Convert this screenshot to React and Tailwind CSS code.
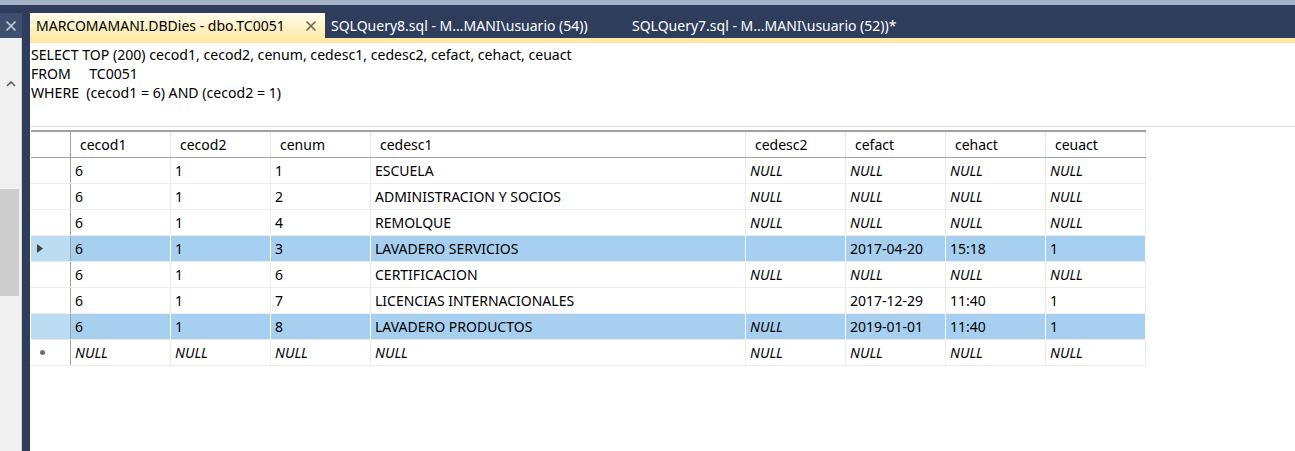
import React from "react";

const cols = [
  { key: "cecod1", w: 100 },
  { key: "cecod2", w: 100 },
  { key: "cenum", w: 100 },
  { key: "cedesc1", w: 375 },
  { key: "cedesc2", w: 100 },
  { key: "cefact", w: 100 },
  { key: "cehact", w: 100 },
  { key: "ceuact", w: 100 },
];

const N = null;
const rows = [
  ["6", "1", "1", "ESCUELA", N, N, N, N],
  ["6", "1", "2", "ADMINISTRACION Y SOCIOS", N, N, N, N],
  ["6", "1", "4", "REMOLQUE", N, N, N, N],
  ["6", "1", "3", "LAVADERO SERVICIOS", "", "2017-04-20", "15:18", "1"],
  ["6", "1", "6", "CERTIFICACION", N, N, N, N],
  ["6", "1", "7", "LICENCIAS INTERNACIONALES", "", "2017-12-29", "11:40", "1"],
  ["6", "1", "8", "LAVADERO PRODUCTOS", N, "2019-01-01", "11:40", "1"],
  [N, N, N, N, N, N, N, N],
];
const selected = [3, 6];

function CloseX({ className }) {
  return (
    <svg width="12" height="12" viewBox="0 0 12 12" className={className}>
      <path d="M1.5 1.5 L10.5 10.5 M10.5 1.5 L1.5 10.5" stroke="currentColor" strokeWidth="1.6" />
    </svg>
  );
}

export default function App() {
  return (
    <div className="w-[1295px] h-[451px] overflow-hidden flex flex-col bg-[#2e3d5b] font-['Noto_Sans','Open_Sans',sans-serif] text-[14px] text-black">
      <div className="h-[5px] bg-[#a6b2c8]" />
      <div className="flex flex-1 min-h-0">
        {/* left tool window */}
        <div className="w-[22px] flex flex-col">
          <div className="h-[8px]" />
          <div className="h-[25px] bg-[#3f4f6e] flex items-center justify-center text-[#c8cfdc]">
            <CloseX />
          </div>
          <div className="flex-1 bg-[#f0f0f0] border-r border-[#cfd3da] flex flex-col">
            <div className="h-[38px]" />
            <div className="h-[14px] flex items-center justify-center text-[#606060]">
              <svg width="10" height="7" viewBox="0 0 10 7">
                <path d="M1 6 L5 2 L9 6" stroke="currentColor" strokeWidth="1.6" fill="none" />
              </svg>
            </div>
            <div className="h-[99px]" />
            <div className="h-[107px] w-[19px] bg-[#cdcdcd]" />
          </div>
        </div>
        <div className="w-[8px]" />
        {/* document area */}
        <div className="flex-1 flex flex-col min-w-0">
          <div className="h-[33px] flex items-end">
            <div className="h-[25px] w-[295px] bg-gradient-to-b from-[#fffcec] to-[#ffe9a8] flex items-center pl-[6px] pr-[8px]">
              <span className="flex-1 whitespace-nowrap">MARCOMAMANI.DBDies - dbo.TC0051</span>
              <CloseX className="text-[#6b6550]" />
            </div>
            <div className="h-[25px] flex items-center pl-[6px] w-[307px] text-white whitespace-nowrap">
              SQLQuery8.sql - M...MANI\usuario (54))
            </div>
            <div className="h-[25px] flex items-center text-white whitespace-nowrap">
              SQLQuery7.sql - M...MANI\usuario (52))*
            </div>
          </div>
          <div className="h-[5px] bg-[#ffe8a6]" />
          <div className="flex-1 bg-white flex flex-col">
            <div className="h-[83px] pl-[1px] pt-[2px] text-[14.1px] leading-[19px] whitespace-pre">
              <div>SELECT TOP (200) cecod1, cecod2, cenum, cedesc1, cedesc2, cefact, cehact, ceuact</div>
              <div>FROM     TC0051</div>
              <div>WHERE  (cecod1 = 6) AND (cecod2 = 1)</div>
            </div>
            <div className="h-[2px] border-t border-[#e3e3e3]" />
            <div className="h-[2px]" />
            <div className="pl-[1px]">
              <div className="w-[1115px] border-t-2 border-[#a0a0a0]">
                <div className="flex h-[26px] border-b border-[#a0a0a0]">
                  <div className="w-[40px] border-r border-[#a0a0a0]" />
                  {cols.map((c) => (
                    <div key={c.key} style={{ width: c.w }} className="border-r border-[#e6e6e6] pl-[9px] flex items-center">
                      {c.key}
                    </div>
                  ))}
                </div>
                {rows.map((r, i) => {
                  const sel = selected.includes(i);
                  return (
                    <div key={i} className={`flex h-[26px] border-b border-[#ececec] ${sel ? "bg-[#a6cff0]" : ""}`}>
                      <div className={`w-[40px] border-r border-[#a0a0a0] flex items-center pl-[6px] ${sel ? "bg-[#bcdcf4]" : ""}`}>
                        {i === 3 && (
                          <svg width="6" height="9" viewBox="0 0 6 9">
                            <path d="M0 0 L6 4.5 L0 9 Z" fill="#404040" />
                          </svg>
                        )}
                        {i === 7 && <span className="ml-[3px] w-[5px] h-[5px] rounded-full bg-[#707070]" />}
                      </div>
                      {r.map((v, j) => (
                        <div key={j} style={{ width: cols[j].w }} className={`border-r ${sel ? "border-[#ffffff]" : "border-[#ececec]"} pl-[4px] flex items-center whitespace-nowrap`}>
                          {v === null ? <span className="italic">NULL</span> : v}
                        </div>
                      ))}
                    </div>
                  );
                })}
              </div>
            </div>
          </div>
        </div>
      </div>
    </div>
  );
}
